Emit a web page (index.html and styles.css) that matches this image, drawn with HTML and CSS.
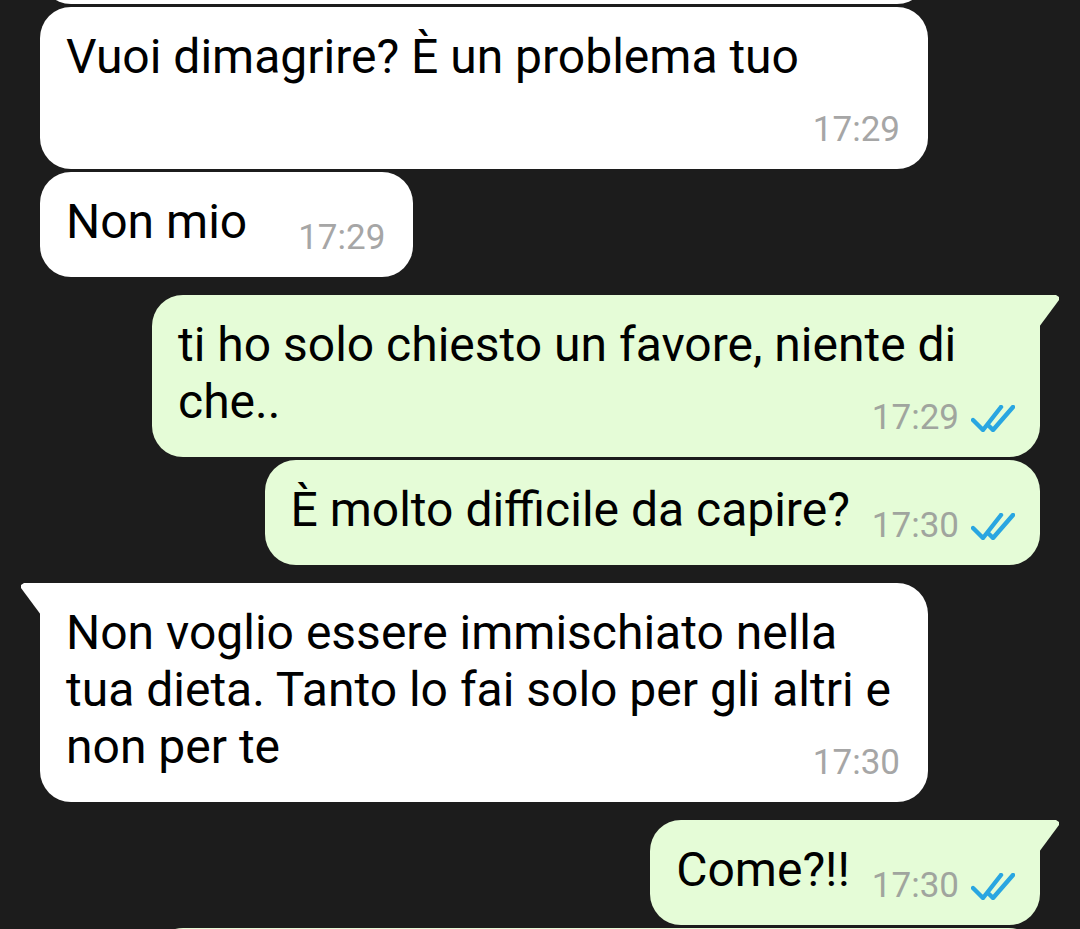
FILE: index.html
```html
<!DOCTYPE html>
<html>
<head>
    <link rel="stylesheet" href="styles.css">
</head>
<body>
    <div class="chat">
        <div class="bubble in cut-top"></div>

        <div class="bubble in">
            <span class="text">Vuoi dimagrire? È un problema tuo</span>
            <span class="meta"><span class="time">17:29</span></span>
        </div>
        <div class="bubble in">
            <span class="text">Non mio</span>
            <span class="meta"><span class="time">17:29</span></span>
        </div>

        <div class="bubble out first">
            <span class="text">ti ho solo chiesto un favore, niente di che..</span>
            <span class="meta">
                <span class="time">17:29</span>
                <svg class="ticks" viewBox="0 0 44 27"><path d="M2 15 L12 25 L30 2 M18 21 L22 25 L42 2"/></svg>
            </span>
        </div>
        <div class="bubble out">
            <span class="text">È molto difficile da capire?</span>
            <span class="meta">
                <span class="time">17:30</span>
                <svg class="ticks" viewBox="0 0 44 27"><path d="M2 15 L12 25 L30 2 M18 21 L22 25 L42 2"/></svg>
            </span>
        </div>

        <div class="bubble in first">
            <span class="text">Non voglio essere immischiato nella tua dieta. Tanto lo fai solo per gli altri e non per te</span>
            <span class="meta"><span class="time">17:30</span></span>
        </div>

        <div class="bubble out first">
            <span class="text">Come?!!</span>
            <span class="meta">
                <span class="time">17:30</span>
                <svg class="ticks" viewBox="0 0 44 27"><path d="M2 15 L12 25 L30 2 M18 21 L22 25 L42 2"/></svg>
            </span>
        </div>
        <div class="bubble out cut-bottom"></div>
    </div>
</body>
</html>
```

FILE: styles.css
```css
html, body {
    margin: 0;
    height: 929px;
    overflow: hidden;
    background: #1c1c1c;
}
.chat {
    display: flex;
    flex-direction: column;
    padding: 0 40px;
    font-family: Roboto, "Liberation Sans", sans-serif;
}
.bubble {
    position: relative;
    box-sizing: border-box;
    max-width: 888px;
    margin-top: 3px;
    padding: 21px 28px 19px 26px;
    border-radius: 31px;
    font-size: 48px;
    line-height: 57px;
    color: #000;
}
.bubble.in {
    align-self: flex-start;
    background: #fff;
}
.bubble.out {
    align-self: flex-end;
    background: #e5fcd7;
    padding-right: 25px;
}
.bubble.first {
    margin-top: 18px;
}
.bubble.in.first {
    border-top-left-radius: 0;
}
.bubble.out.first {
    border-top-right-radius: 0;
}
.bubble.first::before {
    content: "";
    position: absolute;
    top: 0;
    width: 20px;
    height: 32px;
    background: inherit;
}
.bubble.in.first::before {
    left: -19px;
    clip-path: polygon(3px 0, 100% 0, 100% 100%, 0 5px, 0 2px);
}
.bubble.out.first::before {
    right: -19px;
    clip-path: polygon(0 0, calc(100% - 3px) 0, 100% 2px, 100% 5px, 0 100%);
}
.meta {
    float: right;
    display: flex;
    align-items: center;
    margin-top: 25px;
    margin-left: 51px;
    font-size: 35px;
    line-height: 40px;
    color: #a6a6a6;
}
.out .meta {
    margin-left: 22px;
    color: #a0a59e;
}
.ticks {
    width: 44px;
    height: 27px;
    margin-left: 12px;
    fill: none;
    stroke: #29a6e1;
    stroke-width: 4.4;
    stroke-linecap: round;
    stroke-linejoin: round;
}
.cut-top {
    width: 888px;
    height: 80px;
    margin-top: -76px;
}
.cut-bottom {
    width: 888px;
    height: 80px;
}
```
